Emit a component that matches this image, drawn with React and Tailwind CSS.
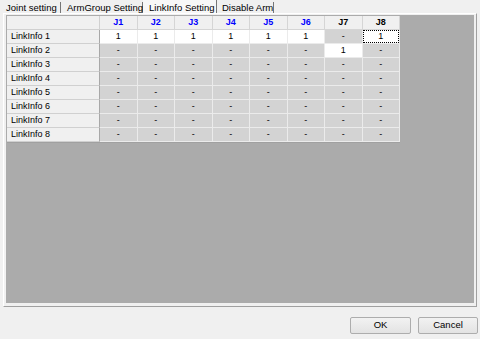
import React from "react";

const cols = ["J1", "J2", "J3", "J4", "J5", "J6", "J7", "J8"];
const rows = [
  ["1", "1", "1", "1", "1", "1", "-", "1"],
  ["-", "-", "-", "-", "-", "-", "1", "-"],
  ["-", "-", "-", "-", "-", "-", "-", "-"],
  ["-", "-", "-", "-", "-", "-", "-", "-"],
  ["-", "-", "-", "-", "-", "-", "-", "-"],
  ["-", "-", "-", "-", "-", "-", "-", "-"],
  ["-", "-", "-", "-", "-", "-", "-", "-"],
  ["-", "-", "-", "-", "-", "-", "-", "-"],
];

export default function App() {
  return (
    <div
      className="w-[480px] h-[339px] bg-[#f0f0f0] flex flex-col text-[#000] overflow-hidden"
      style={{ fontFamily: '"Liberation Sans", Arial, sans-serif' }}
    >
      {/* tabs */}
      <div className="h-[13px] flex pl-[3px] text-[9.5px] leading-[11px]">
        <div className="w-[58px] h-[11px] mt-[2px] pl-[3px] border-r border-[#767676] whitespace-nowrap">Joint setting</div>
        <div className="w-[82px] h-[11px] mt-[2px] pl-[6px] border-r border-[#767676] whitespace-nowrap">ArmGroup Setting</div>
        <div className="w-[74px] h-[13px] pt-[2px] pl-[6px] border-r border-[#767676] bg-[#f7f7f7] whitespace-nowrap">LinkInfo Setting</div>
        <div className="w-[57px] h-[11px] mt-[2px] pl-[5px] border-r border-[#767676] whitespace-nowrap">Disable Arm</div>
      </div>
      {/* panel */}
      <div className="ml-[3px] w-[474px] h-[294px] border-l border-t border-white border-r border-b border-r-[#a0a0a0] border-b-[#a0a0a0] pl-[2px] pt-[1px] pr-[2px] pb-[3px] flex">
        <div className="flex-1 bg-[#ababab] pl-[1px] pt-[1px]">
          <div className="grid grid-cols-[93px_repeat(8,37.5px)] w-[393px] border-r border-b border-[#a0a0a0] text-[9px]">
            {/* header row */}
            <div className="h-[14px] bg-[#f0f0f0] border-r border-b border-[#d0d0d0]"></div>
            {cols.map((c, i) => (
              <div
                key={c}
                className={
                  "h-[14px] bg-[#f0f0f0] border-r border-b border-[#d5d5d5] flex items-center justify-center font-bold " +
                  (i < 6 ? "text-[#0000ff]" : "text-black")
                }
              >
                {c}
              </div>
            ))}
            {rows.map((r, ri) => (
              <React.Fragment key={ri}>
                <div className="h-[14px] bg-[#f0f0f0] border-r border-b border-r-[#a8a8a8] border-b-[#d0d0d0] flex items-center pl-[4px] whitespace-nowrap">
                  LinkInfo {ri + 1}
                </div>
                {r.map((v, ci) => {
                  const white = v === "1";
                  const focus = ri === 0 && ci === 7;
                  return (
                    <div
                      key={ci}
                      className={
                        "h-[14px] border-r border-b border-[#ebebeb] flex items-center justify-center " +
                        (white ? "bg-white" : "bg-[#d3d3d3]")
                      }
                    >
                      {focus ? (
                        <div className="w-full h-full border border-dotted border-black flex items-center justify-center">
                          {v}
                        </div>
                      ) : (
                        v
                      )}
                    </div>
                  );
                })}
              </React.Fragment>
            ))}
          </div>
        </div>
      </div>
      {/* buttons */}
      <div className="flex justify-end gap-[7px] pr-[2px] mt-[10px] text-[9.5px]">
        <button className="w-[61px] h-[17px] rounded-[2px] border border-[#adadad] bg-gradient-to-b from-[#f2f2f2] to-[#e3e3e3] flex items-center justify-center">
          OK
        </button>
        <button className="w-[60px] h-[17px] rounded-[2px] border border-[#adadad] bg-gradient-to-b from-[#f2f2f2] to-[#e3e3e3] flex items-center justify-center">
          Cancel
        </button>
      </div>
    </div>
  );
}
